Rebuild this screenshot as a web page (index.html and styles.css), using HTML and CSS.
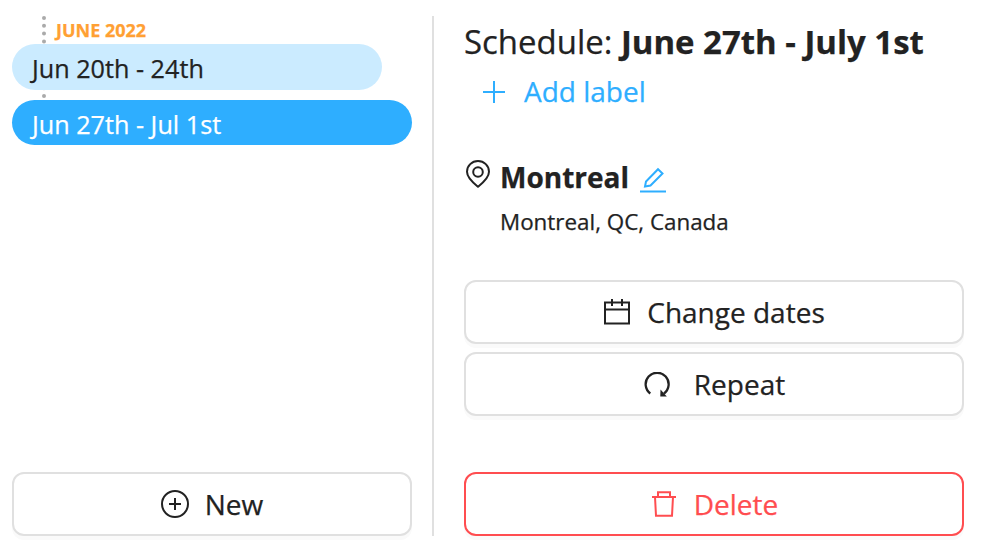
FILE: index.html
```html
<!DOCTYPE html>
<html lang="en">
<head>
<meta charset="utf-8">
<title>Schedule</title>
<link rel="stylesheet" href="styles.css">
</head>
<body>
<main class="app">
  <section class="sidebar">
    <div class="timeline">
      <svg class="dots" viewBox="0 0 4 84" aria-hidden="true"><path d="M2 2V84"/></svg>
      <h2 class="month">JUNE 2022</h2>
      <div class="entry">Jun 20th - 24th</div>
      <div class="entry active">Jun 27th - Jul 1st</div>
    </div>
    <button class="btn new">
      <svg width="28" height="28" viewBox="0 0 28 28"><circle cx="14" cy="14" r="13"/><path d="M8 14h12M14 8v12"/></svg>
      <span>New</span>
    </button>
  </section>
  <section class="detail">
    <h1 class="title">Schedule: <b>June 27th - July 1st</b></h1>
    <a class="add">
      <svg width="22" height="22" viewBox="0 0 22 22"><path d="M0 11h22M11 0v22"/></svg>
      <span>Add label</span>
    </a>
    <div class="place">
      <svg class="pin" width="24" height="28" viewBox="0 0 24 28"><path d="M12 26.700C7.500 23 1 18 1 11.700a11 10.700 0 0 1 22 0C23 18 16.500 23 12 26.700Z"/><circle cx="12" cy="12" r="4.800"/></svg>
      <span class="city">Montreal</span>
      <svg class="edit" width="26" height="26" viewBox="0 0 26 26"><path d="M0 24.500h26"/><path d="M5 19.500 6 14.500 18 2.200 22.500 6.500 10.500 18.500Z"/></svg>
    </div>
    <p class="address">Montreal, QC, Canada</p>
    <div class="actions">
      <button class="btn change">
        <svg width="26" height="26" viewBox="0 0 26 26"><path d="M1 3.500h24v21H1ZM1 10.500h24M8 0v7M18 0v7"/></svg>
        <span>Change dates</span>
      </button>
      <button class="btn repeat">
        <svg width="26" height="26" viewBox="0 0 26 26"><path d="M6.300 21.500A11.500 11.500 0 1 1 20 21.500"/><path class="solid" d="M16.500 17.500 16.300 24.500h6.500Z"/></svg>
        <span>Repeat</span>
      </button>
    </div>
    <button class="btn delete">
      <svg width="24" height="26" viewBox="0 0 24 26"><path d="M0 6h24M6 6V1.200h12V6M3 6 4 24.700h16L21 6"/></svg>
      <span>Delete</span>
    </button>
  </section>
</main>
</body>
</html>
```
FILE: styles.css
```css
* { box-sizing: border-box; }
body { margin: 0; background: #fff; color: #222; font-family: "Open Sans", sans-serif; -webkit-text-stroke: .25px currentColor; }
h1, h2, p { margin: 0; }
svg { fill: none; stroke: currentColor; stroke-width: 2; flex: none; }
.app { display: flex; width: 986px; height: 550px; padding: 16px 22px 14px 12px; }
.sidebar { width: 422px; padding-right: 20px; border-right: 2px solid #e0e0e0; display: flex; flex-direction: column; justify-content: space-between; }
.timeline { position: relative; }
.dots { position: absolute; left: 30px; top: 0; width: 4px; height: 84px; color: #aaa; stroke-width: 4; stroke-linecap: round; stroke-dasharray: 0 7.800; }
.month { height: 28px; padding-left: 44px; font-size: 18px; line-height: 28px; font-weight: 700; color: #ffa033; }
.entry { position: relative; width: 370px; height: 46px; margin-bottom: 10px; padding-left: 20px; border-radius: 23px; background: #cbebff; font-size: 25.200px; line-height: 49px; }
.entry.active { width: 400px; height: 45px; margin: 0; background: #2eaeff; color: #fff; }
.btn { display: flex; align-items: center; justify-content: center; width: 100%; height: 64px; padding: 0; border: 2px solid #e0e0e0; border-radius: 12px; background: #fff; box-shadow: 0 4px 0 #fafafa; color: #222; font: 28px/60px "Open Sans", sans-serif; -webkit-text-stroke: .25px currentColor; }
.new { gap: 16px; }
.detail { display: flex; flex-direction: column; flex: 1; padding-left: 30px; }
.title { height: 52px; font-size: 32.950px; line-height: 52px; font-weight: 400; white-space: nowrap; }
.title b { font-weight: 700; }
.add { display: flex; align-items: center; gap: 19px; height: 46px; padding-left: 19px; color: #2eaeff; font-size: 28px; line-height: 46px; }
.add svg { margin-top: 2px; }
.place { display: flex; align-items: center; height: 42px; margin-top: 42px; padding-left: 2px; font-size: 28px; line-height: 42px; font-weight: 700; }
.city { margin: 0 11px 0 10px; }
.pin { margin-bottom: 6px; }
.edit { color: #2eaeff; margin-top: 5px; }
.address { height: 46px; padding-left: 36px; font-size: 22.400px; line-height: 48px; }
.actions { display: flex; flex-direction: column; gap: 8px; margin-top: 36px; }
.change { gap: 17px; padding-left: 1px; }
.repeat { gap: 24px; padding-left: 1px; }
.repeat svg { margin-top: 2px; stroke-width: 2.300; }
.repeat .solid { fill: currentColor; stroke: none; }
.delete { gap: 18px; margin-top: auto; padding-left: 2px; border-color: #ff4d50; color: #ff4d50; }
```
